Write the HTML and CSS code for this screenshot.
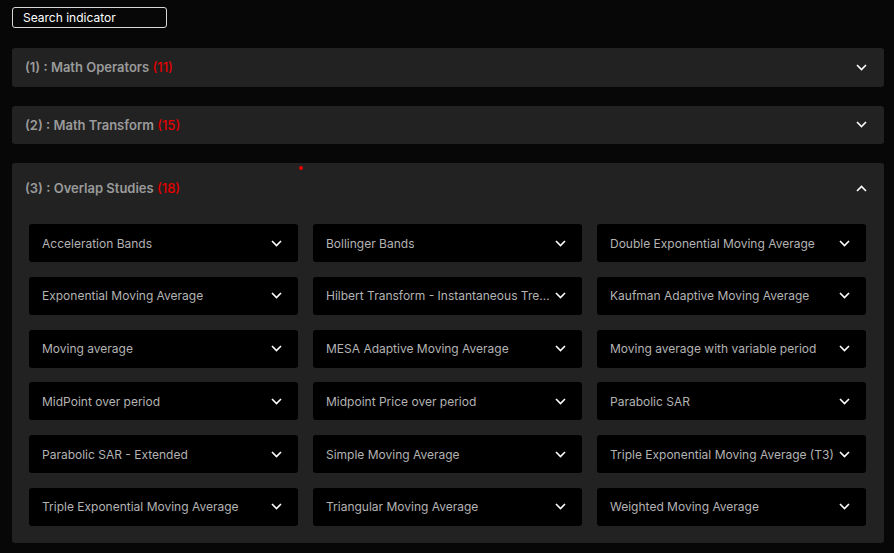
FILE: index.html
```html
<!DOCTYPE html>
<html>
<head>
<meta charset="utf-8">
<link rel="stylesheet" href="styles.css">
</head>
<body>
<div class="page">
  <div class="search">Search indicator</div>

  <div class="panel">
    <div class="panel-head">
      <span class="title">(1) : Math Operators <span class="count">(11)</span></span>
      <svg class="chev" width="11" height="7" viewBox="0 0 11 7"><polyline points="1,1 5.5,5.5 10,1" fill="none" stroke="#fff" stroke-width="1.6"/></svg>
    </div>
  </div>

  <div class="panel">
    <div class="panel-head">
      <span class="title">(2) : Math Transform <span class="count">(15)</span></span>
      <svg class="chev" width="11" height="7" viewBox="0 0 11 7"><polyline points="1,1 5.5,5.5 10,1" fill="none" stroke="#fff" stroke-width="1.6"/></svg>
    </div>
  </div>

  <div class="panel open">
    <span class="dot"></span>
    <div class="panel-head tall">
      <span class="title">(3) : Overlap Studies <span class="count">(18)</span></span>
      <svg class="chev" width="11" height="7" viewBox="0 0 11 7"><polyline points="1,6 5.5,1.5 10,6" fill="none" stroke="#fff" stroke-width="1.6"/></svg>
    </div>
    <div class="grid">
      <div class="item"><span>Acceleration Bands</span><svg width="11" height="7" viewBox="0 0 11 7"><polyline points="1,1 5.5,5.5 10,1" fill="none" stroke="#fff" stroke-width="1.6"/></svg></div>
      <div class="item"><span>Bollinger Bands</span><svg width="11" height="7" viewBox="0 0 11 7"><polyline points="1,1 5.5,5.5 10,1" fill="none" stroke="#fff" stroke-width="1.6"/></svg></div>
      <div class="item"><span>Double Exponential Moving Average</span><svg width="11" height="7" viewBox="0 0 11 7"><polyline points="1,1 5.5,5.5 10,1" fill="none" stroke="#fff" stroke-width="1.6"/></svg></div>
      <div class="item"><span>Exponential Moving Average</span><svg width="11" height="7" viewBox="0 0 11 7"><polyline points="1,1 5.5,5.5 10,1" fill="none" stroke="#fff" stroke-width="1.6"/></svg></div>
      <div class="item"><span>Hilbert Transform - Instantaneous Trendline</span><svg width="11" height="7" viewBox="0 0 11 7"><polyline points="1,1 5.5,5.5 10,1" fill="none" stroke="#fff" stroke-width="1.6"/></svg></div>
      <div class="item"><span>Kaufman Adaptive Moving Average</span><svg width="11" height="7" viewBox="0 0 11 7"><polyline points="1,1 5.5,5.5 10,1" fill="none" stroke="#fff" stroke-width="1.6"/></svg></div>
      <div class="item"><span>Moving average</span><svg width="11" height="7" viewBox="0 0 11 7"><polyline points="1,1 5.5,5.5 10,1" fill="none" stroke="#fff" stroke-width="1.6"/></svg></div>
      <div class="item"><span>MESA Adaptive Moving Average</span><svg width="11" height="7" viewBox="0 0 11 7"><polyline points="1,1 5.5,5.5 10,1" fill="none" stroke="#fff" stroke-width="1.6"/></svg></div>
      <div class="item"><span>Moving average with variable period</span><svg width="11" height="7" viewBox="0 0 11 7"><polyline points="1,1 5.5,5.5 10,1" fill="none" stroke="#fff" stroke-width="1.6"/></svg></div>
      <div class="item"><span>MidPoint over period</span><svg width="11" height="7" viewBox="0 0 11 7"><polyline points="1,1 5.5,5.5 10,1" fill="none" stroke="#fff" stroke-width="1.6"/></svg></div>
      <div class="item"><span>Midpoint Price over period</span><svg width="11" height="7" viewBox="0 0 11 7"><polyline points="1,1 5.5,5.5 10,1" fill="none" stroke="#fff" stroke-width="1.6"/></svg></div>
      <div class="item"><span>Parabolic SAR</span><svg width="11" height="7" viewBox="0 0 11 7"><polyline points="1,1 5.5,5.5 10,1" fill="none" stroke="#fff" stroke-width="1.6"/></svg></div>
      <div class="item"><span>Parabolic SAR - Extended</span><svg width="11" height="7" viewBox="0 0 11 7"><polyline points="1,1 5.5,5.5 10,1" fill="none" stroke="#fff" stroke-width="1.6"/></svg></div>
      <div class="item"><span>Simple Moving Average</span><svg width="11" height="7" viewBox="0 0 11 7"><polyline points="1,1 5.5,5.5 10,1" fill="none" stroke="#fff" stroke-width="1.6"/></svg></div>
      <div class="item"><span>Triple Exponential Moving Average (T3)</span><svg width="11" height="7" viewBox="0 0 11 7"><polyline points="1,1 5.5,5.5 10,1" fill="none" stroke="#fff" stroke-width="1.6"/></svg></div>
      <div class="item"><span>Triple Exponential Moving Average</span><svg width="11" height="7" viewBox="0 0 11 7"><polyline points="1,1 5.5,5.5 10,1" fill="none" stroke="#fff" stroke-width="1.6"/></svg></div>
      <div class="item"><span>Triangular Moving Average</span><svg width="11" height="7" viewBox="0 0 11 7"><polyline points="1,1 5.5,5.5 10,1" fill="none" stroke="#fff" stroke-width="1.6"/></svg></div>
      <div class="item"><span>Weighted Moving Average</span><svg width="11" height="7" viewBox="0 0 11 7"><polyline points="1,1 5.5,5.5 10,1" fill="none" stroke="#fff" stroke-width="1.6"/></svg></div>
    </div>
  </div>
</div>
</body>
</html>
```

FILE: styles.css
```css
html, body {
  margin: 0;
  padding: 0;
  background: #070707;
}
body {
  font-family: Inter, "Open Sans", sans-serif;
  overflow: hidden;
}
.page {
  padding: 7px 10px 0 12px;
  display: flex;
  flex-direction: column;
}
.search {
  width: 143px;
  height: 19px;
  border: 1px solid #d8d8d8;
  border-radius: 3px;
  color: #fff;
  font-size: 12px;
  line-height: 19px;
  padding-left: 10px;
  margin-bottom: 20px;
}
.panel {
  position: relative;
  background: #222222;
  border-radius: 3px;
  margin-bottom: 19px;
}
.panel-head {
  height: 38.5px;
  padding: 0 17px 0 13px;
  display: flex;
  align-items: center;
  justify-content: space-between;
}
.panel-head.tall {
  height: 50px;
}
.title {
  color: #9a9a9a;
  font-size: 13px;
  font-weight: 600;
}
.count {
  color: #e10000;
  font-weight: 500;
}
.chev {
  display: block;
}
.dot {
  position: absolute;
  left: 287px;
  top: 3px;
  width: 4px;
  height: 4px;
  border-radius: 50%;
  background: #e00;
}
.grid {
  display: grid;
  grid-template-columns: repeat(3, 269px);
  column-gap: 15px;
  row-gap: 14.8px;
  padding: 11px 18px 17px 17px;
}
.item {
  height: 38px;
  background: #000;
  border-radius: 3px;
  display: flex;
  align-items: center;
  justify-content: space-between;
  padding: 0 16px 0 13px;
  box-sizing: border-box;
  color: #b3b3b3;
  font-size: 12px;
}
.item span {
  white-space: nowrap;
  overflow: hidden;
  text-overflow: ellipsis;
  margin-right: 4px;
}
.item svg {
  flex: none;
}
```
